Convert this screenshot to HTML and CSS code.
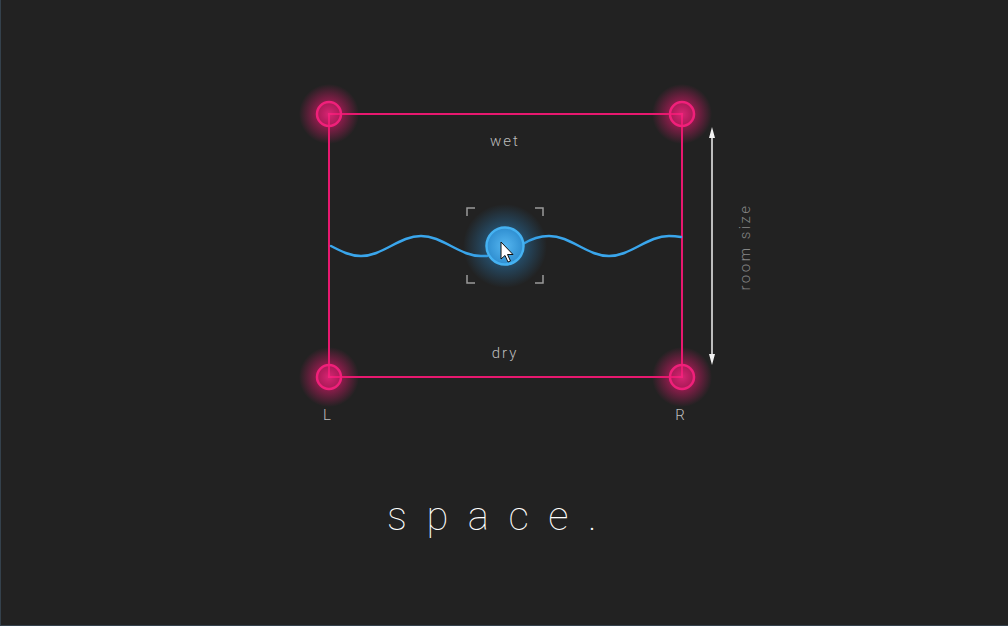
FILE: index.html
```html
<!DOCTYPE html>
<html>
  <head>
    <title>space.</title>
    <meta http-equiv="Content-Type" content="text/html; charset=utf-8" />
    <link rel="stylesheet" href="styles.css">
  </head>
  <body>
    <div id="app">
      <svg id="pad" width="520" height="440" viewBox="244 0 520 440">
        <defs>
          <radialGradient id="pinkGlow">
            <stop offset="0" stop-color="#ff2d8a" stop-opacity="0.8"/>
            <stop offset="0.45" stop-color="#e8186f" stop-opacity="0.5"/>
            <stop offset="1" stop-color="#e8186f" stop-opacity="0"/>
          </radialGradient>
          <radialGradient id="blueGlow">
            <stop offset="0" stop-color="#3aa6ec" stop-opacity="0.75"/>
            <stop offset="0.5" stop-color="#2a8fd6" stop-opacity="0.35"/>
            <stop offset="1" stop-color="#2a8fd6" stop-opacity="0"/>
          </radialGradient>
          <radialGradient id="blueFill">
            <stop offset="0" stop-color="#55b6f0"/>
            <stop offset="1" stop-color="#2f8ed0"/>
          </radialGradient>
        </defs>

        <!-- room -->
        <rect class="room" x="328" y="114" width="353" height="263"/>

        <!-- corners -->
        <g class="corner"><circle class="glow" cx="328" cy="114" r="30"/><circle class="ring" cx="328" cy="114" r="12"/></g>
        <g class="corner"><circle class="glow" cx="681" cy="114" r="30"/><circle class="ring" cx="681" cy="114" r="12"/></g>
        <g class="corner"><circle class="glow" cx="328" cy="377" r="30"/><circle class="ring" cx="328" cy="377" r="12"/></g>
        <g class="corner"><circle class="glow" cx="681" cy="377" r="30"/><circle class="ring" cx="681" cy="377" r="12"/></g>

        <!-- wave -->
        <path class="wave" d="M330,246 C340,251.25 349.2,256 360,256 C370.8,256 380,251.25 390,246 C400,240.75 409.2,236 420,236 C430.8,236 440,240.75 450,246 C460,251.25 469.2,256 480,256 L486,256"/>
        <path class="wave" d="M522,244 C530,239 538,236 548,236 C558.8,236 568,240.75 578,246 C588,251.25 597.2,256 608,256 C618.8,256 628,251.25 638,246 C648,240.75 657.2,236 668,236 C673,236 677,236.5 680,237"/>

        <!-- focus brackets -->
        <path class="bracket" d="M466,216 V208 H474 M534,208 H542 V216 M542,275 V283 H534 M474,283 H466 V275"/>

        <!-- knob -->
        <circle cx="504" cy="246" r="42" fill="url(#blueGlow)"/>
        <circle class="knob" cx="504" cy="246" r="18.5"/>

        <!-- cursor -->
        <path class="cursor" d="M500,242 L500,259 L504,255.5 L507,262 L509.5,261 L506.5,254.5 L512,254.5 Z"/>

        <!-- room size arrow -->
        <line class="arrow" x1="711" y1="134" x2="711" y2="358"/>
        <path class="arrowhead" d="M708,138 L711,127 L714,138 Z M708,354 L711,365 L714,354 Z"/>

        <text class="label" x="504" y="146">wet</text>
        <text class="label" x="504" y="358">dry</text>
        <text class="label" x="327" y="420">L</text>
        <text class="label" x="680" y="420">R</text>
        <text class="side" x="0" y="0" transform="translate(749,247) rotate(-90)">room size</text>
      </svg>

      <h1 id="title">space.</h1>
    </div>
  </body>
</html>
```

FILE: styles.css
```css
body {
    margin: 0;
    padding: 0;
    height: 100vh;
    box-sizing: border-box;
    background: #222222;
    border-left: 1px solid #34414c;
    border-bottom: 1px solid #34414c;
    font-family: Roboto, "Liberation Sans", sans-serif;
    overflow: hidden;
}

#app {
    display: flex;
    flex-direction: column;
    align-items: center;
}

#pad {
    display: block;
}

.room {
    fill: none;
    stroke: #e8186f;
    stroke-width: 2;
}

.corner .glow {
    fill: url(#pinkGlow);
}
.corner .ring {
    fill: rgba(232, 24, 111, 0.3);
    stroke: #f0207a;
    stroke-width: 2.5;
}

.wave {
    fill: none;
    stroke: #3aa6ec;
    stroke-width: 2.5;
    stroke-linecap: round;
}

.bracket {
    fill: none;
    stroke: #9a9a9a;
    stroke-width: 1.5;
}

.knob {
    fill: url(#blueFill);
    stroke: #45b2f2;
    stroke-width: 2.5;
}

.cursor {
    fill: #ffffff;
    stroke: #111111;
    stroke-width: 1;
    stroke-linejoin: round;
}

.arrow {
    stroke: #f2f2f2;
    stroke-width: 1.5;
}
.arrowhead {
    fill: #f2f2f2;
}

.label {
    fill: #bdbdbd;
    font-size: 15px;
    font-weight: 300;
    letter-spacing: 2px;
    text-anchor: middle;
}

.side {
    fill: #858585;
    font-size: 15px;
    font-weight: 300;
    letter-spacing: 2.5px;
    text-anchor: middle;
}

#title {
    margin: 57px 0 0 -6px;
    color: #ffffff;
    font-size: 40px;
    font-weight: 100;
    letter-spacing: 19.5px;
    line-height: 1;
}
```
